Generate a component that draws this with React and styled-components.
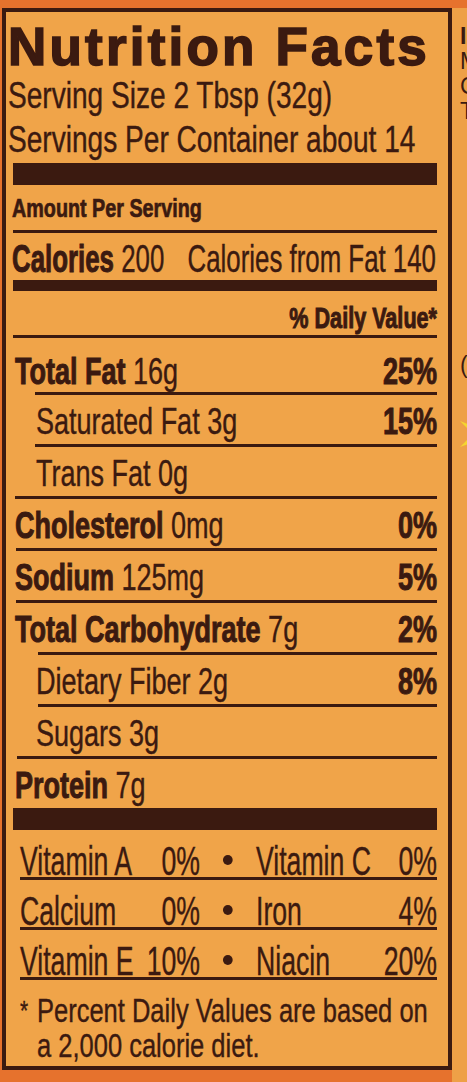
import React from 'react';
import styled, { createGlobalStyle, css } from 'styled-components';

// label colours
const ink = '#3b1a10';
const paper = '#f0a449';
const sans = `"Liberation Sans", Arial, sans-serif`;

const GlobalStyle = createGlobalStyle`
  html, body {
    margin: 0;
    padding: 0;
    background: #e6722d;
  }
  body {
    font-family: ${sans};
    color: ${ink};
  }
`;

// the label is set in a condensed face: squeeze each text line sideways,
// widening its box by the same factor so flex alignment still lands right
const squeeze = css`
  box-sizing: border-box;
  width: calc(100% / ${(p) => p.$sx});
  transform: scaleX(${(p) => p.$sx});
  transform-origin: left center;
  margin-left: ${(p) => Math.min(p.$indent || 0, 0)}px;
  padding-left: calc(${(p) => Math.max(p.$indent || 0, 0)}px / ${(p) => p.$sx});
  white-space: nowrap;
  -webkit-text-stroke: 0.4px ${ink};
`;

const Page = styled.div`
  width: 467px;
  height: 1082px;
  box-sizing: border-box;
  padding: 8px 0 12px;
  display: flex;
  overflow: hidden;
`;

const Label = styled.section`
  margin-left: 2px;
  width: 450px;
  height: 1062px;
  box-sizing: border-box;
  border: 4px solid ${ink};
  background: ${paper};
  padding: 0 11px 0 7px;
  display: flex;
  flex-direction: column;
`;

const Title = styled.h1`
  margin: 10px 0 0 -5px;
  font-weight: 900;
  font-size: 53px;
  line-height: 50px;
  letter-spacing: 3.2px;
  -webkit-text-stroke: 1.6px ${ink};
  white-space: nowrap;
`;

const ServingLine = styled.div`
  ${squeeze}
  font-size: 36px;
  line-height: 44px;
  &:first-of-type {
    margin-top: 2px;
  }
`;

const Bar = styled.div`
  height: ${(p) => p.$h}px;
  background: ${ink};
  flex-shrink: 0;
  margin-top: ${(p) => p.$mt || 0}px;
`;

const Rule = styled.div`
  height: 3px;
  margin-left: ${(p) => p.$indent || 0}px;
  background: ${ink};
  flex-shrink: 0;
`;

const AmountRow = styled.div`
  ${squeeze}
  padding-top: 8px;
  padding-bottom: 7px;
  font-size: 25px;
  line-height: 30px;
  font-weight: 700;
  -webkit-text-stroke: 0.7px ${ink};
`;

const Row = styled.div`
  ${squeeze}
  display: flex;
  justify-content: ${(p) => (p.$end ? 'flex-end' : 'space-between')};
  align-items: baseline;
  padding-top: ${(p) => p.$pt ?? 5}px;
  font-size: ${(p) => p.$size || 37}px;
  line-height: ${(p) => p.$lh || 44}px;
`;

const Name = styled.b`
  font-weight: 700;
  -webkit-text-stroke: 1px ${ink};
`;

const Pct = styled.b`
  font-weight: 700;
  -webkit-text-stroke: 1px ${ink};
`;

const VitaminRow = styled.div`
  ${squeeze}
  display: grid;
  grid-template-columns: calc(125px / 0.65) calc(55px / 0.65) calc(56px / 0.65) 1fr auto;
  align-items: baseline;
  padding-top: 15px;
  font-size: 41px;
  line-height: 32px;
`;

const VitPct = styled.span`
  text-align: right;
`;

const DotCell = styled.span`
  display: flex;
  justify-content: center;
`;

const Dot = styled.i`
  display: block;
  width: calc(10px / 0.65);
  height: 10px;
  border-radius: 50%;
  background: ${ink};
  transform: translateY(-10px);
`;

const Footnote = styled.div`
  ${squeeze}
  display: flex;
  padding-top: 13px;
  font-size: 34px;
  line-height: 35px;
`;

const Star = styled.span`
  width: calc(17px / 0.75);
  flex-shrink: 0;
  font-size: 28px;
`;

const Side = styled.aside`
  flex: 1;
  height: 1062px;
  background: #eea047;
  overflow: hidden;
  padding: 16px 0 0 8px;
  display: flex;
  flex-direction: column;
  font-size: 23px;
  line-height: 25px;
`;

const SideLine = styled.div`
  font-weight: ${(p) => (p.$bold ? 700 : 400)};
  margin-top: ${(p) => p.$mt || 0}px;
  white-space: nowrap;
`;

const Burst = styled.svg`
  margin-top: 31px;
  flex-shrink: 0;
`;

const nutrients = [
  { name: 'Total Fat', amount: '16g', pct: '25%', pt: 14, lh: 40, rule: 22 },
  { name: 'Saturated Fat 3g', sub: true, pct: '15%', rule: 22 },
  { name: 'Trans Fat 0g', sub: true, rule: 2 },
  { name: 'Cholesterol', amount: '0mg', pct: '0%', rule: 3 },
  { name: 'Sodium', amount: '125mg', pct: '5%', rule: 3 },
  { name: 'Total Carbohydrate', amount: '7g', pct: '2%', rule: 25 },
  { name: 'Dietary Fiber 2g', sub: true, pct: '8%', rule: 25 },
  { name: 'Sugars 3g', sub: true, rule: 4 },
  { name: 'Protein', amount: '7g' },
];

const vitamins = [
  ['Vitamin A', '0%', 'Vitamin C', '0%'],
  ['Calcium', '0%', 'Iron', '4%'],
  ['Vitamin E', '10%', 'Niacin', '20%'],
];

export default function App() {
  return (
    <>
      <GlobalStyle />
      <Page>
        <Label>
          <Title>Nutrition Facts</Title>
          <ServingLine $sx={0.78} $indent={-5}>Serving Size 2 Tbsp (32g)</ServingLine>
          <ServingLine $sx={0.78} $indent={-5}>Servings Per Container about 14</ServingLine>
          <Bar $h={22} $mt={1} />
          <AmountRow $sx={0.79} $indent={-1}>Amount Per Serving</AmountRow>
          <Rule />
          <Row $sx={0.68} $indent={-1} $pt={6} $lh={41} $size={38}>
            <span>
              <Name>Calories</Name> 200
            </span>
            <span>Calories from Fat 140</span>
          </Row>
          <Bar $h={11} />
          <Row $sx={0.72} $end $pt={9} $lh={35} $size={30}>
            <Pct>% Daily Value*</Pct>
          </Row>
          <Rule />
          {nutrients.map((n) => (
            <React.Fragment key={n.name}>
              <Row $sx={0.73} $indent={n.sub ? 23 : 2} $pt={n.pt} $lh={n.lh}>
                <span>
                  {n.amount ? (
                    <>
                      <Name>{n.name}</Name> {n.amount}
                    </>
                  ) : (
                    n.name
                  )}
                </span>
                {n.pct && <Pct>{n.pct}</Pct>}
              </Row>
              {n.rule !== undefined && <Rule $indent={n.rule} />}
            </React.Fragment>
          ))}
          <Bar $h={22} />
          {vitamins.map((v) => (
            <React.Fragment key={v[0]}>
              <VitaminRow $sx={0.65} $indent={7}>
                <span>{v[0]}</span>
                <VitPct>{v[1]}</VitPct>
                <DotCell>
                  <Dot />
                </DotCell>
                <span>{v[2]}</span>
                <VitPct>{v[3]}</VitPct>
              </VitaminRow>
              <Rule $indent={7} />
            </React.Fragment>
          ))}
          <Footnote $sx={0.75} $indent={7}>
            <Star>*</Star>
            <span>
              Percent Daily Values are based on
              <br />a 2,000 calorie diet.
            </span>
          </Footnote>
        </Label>
        <Side>
          <SideLine $bold>I</SideLine>
          <SideLine>M</SideLine>
          <SideLine>C</SideLine>
          <SideLine>T</SideLine>
          <SideLine $mt={229}>(</SideLine>
          <Burst width="40" height="50" viewBox="0 0 40 50">
            <path
              d="M20 0 L24 18 L40 12 L27 25 L40 38 L24 32 L20 50 L16 32 L0 38 L13 25 L0 12 L16 18 Z"
              fill="#f4d630"
            />
          </Burst>
        </Side>
      </Page>
    </>
  );
}
